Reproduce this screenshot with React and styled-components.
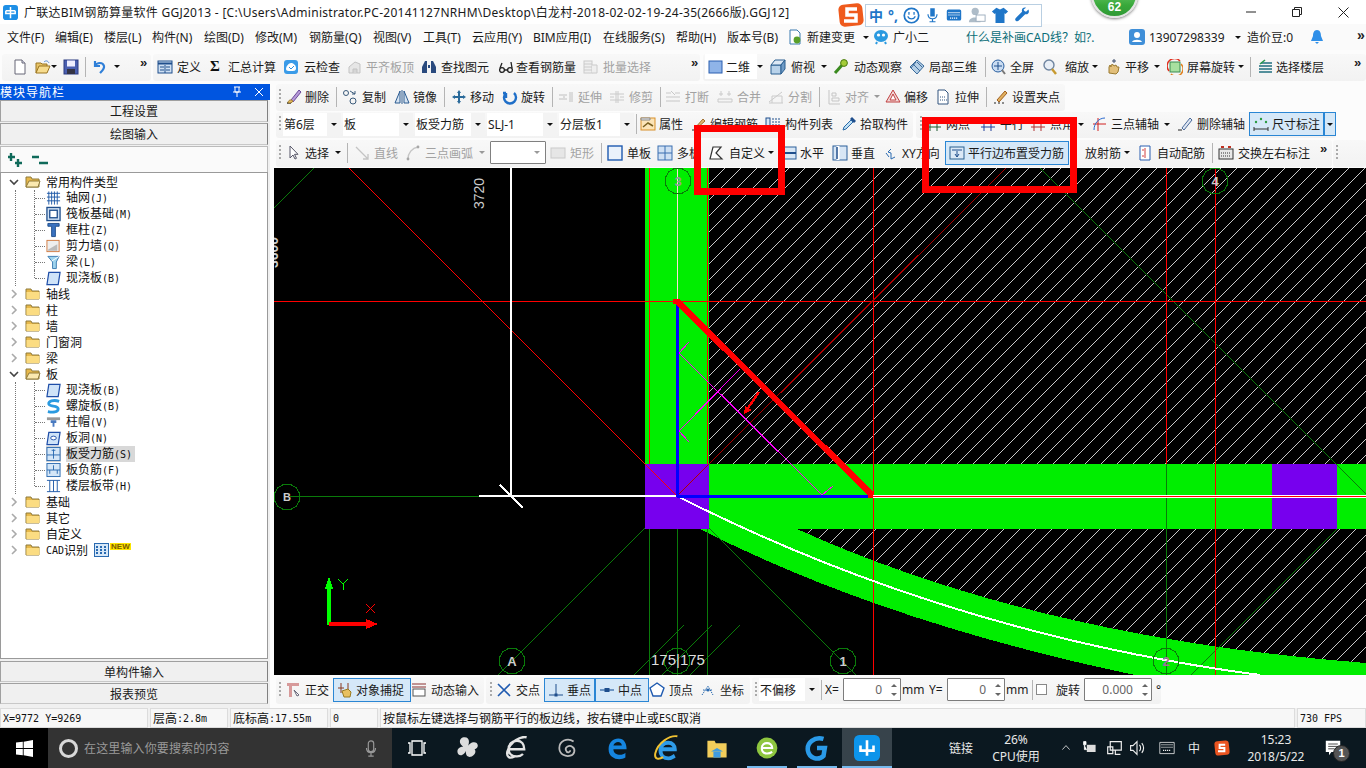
import React from "react";
import styled, { createGlobalStyle } from "styled-components";

const Global = createGlobalStyle`
  html, body { margin: 0; padding: 0; background: #fff; overflow: hidden; }
  * { box-sizing: border-box; }
`;

const UI = `"Noto Sans", "Noto Sans CJK SC", sans-serif`;

/* ---------- icons ---------- */
const ICONS = {
  new: <><path d="M3 1h7l3 3v11H3z" fill="#fff" stroke="#667" /><path d="M10 1v3h3" fill="#dde" stroke="#667" /></>,
  open: <><path d="M1 14V4h5l1 1h5v2" fill="#e8c468" stroke="#9a7420" /><path d="M1 14l3-7h11l-3 7z" fill="#f7dc8e" stroke="#9a7420" /><path d="M9 3c2-2 4-1 5 1" stroke="#5a8fd5" fill="none" /></>,
  save: <><rect x="1" y="1" width="14" height="14" fill="#4a5fb0" stroke="#2a3a80" /><rect x="4" y="1.5" width="8" height="6" fill="#eef" /><rect x="4" y="10" width="8" height="5" fill="#334" /></>,
  undo: <path d="M4 2v5h5M4 7c2-4 8-4 9 0 .6 3-2 5-4 7" stroke="#2f7fd8" strokeWidth="2.2" fill="none" />,
  def: <><rect x="1" y="2" width="14" height="12" fill="#cfe0f3" stroke="#1f4e8c" /><path d="M1 4.5h14" stroke="#1f4e8c" strokeWidth="2" /><path d="M3 8h4M3 11h4M9 8h4M9 11h4M8 6v8" stroke="#1f4e8c" /></>,
  cloud: <><rect x="1" y="1" width="14" height="14" rx="3" fill="#3a9be8" /><path d="M3 10c0-3 3-6 5-6s5 2 5 5-2 3-5 3-5 0-5-2z" fill="#fff" /><path d="M6 8l2 2 3-3" stroke="#2b8fe0" fill="none" /></>,
  flat: <><path d="M2 14V8l6-5 5 2v9z" fill="#e4e4e4" stroke="#bbb" /><path d="M6 14v-4h4v4" stroke="#bbb" fill="#d0d0d0" /></>,
  binoc: <path d="M2 6l2-4h2v4v8H1V8zM14 6l-2-4h-2v4v8h5V8zM7 6h2v3H7z" fill="#2a4a7e" />,
  glasses: <g stroke="#222" fill="none" strokeWidth="1.3"><circle cx="4" cy="11" r="2.4" /><circle cx="12" cy="11" r="2.4" /><path d="M6.5 11h3M2 9l2-5M14 9l-1-6" /></g>,
  batch: <g stroke="#c4c4c4" fill="#eee"><rect x="1" y="2" width="8" height="12" /><path d="M1 5h8M1 8h8M1 11h8" /><path d="M9 6h5v8H9" /></g>,
  square: <rect x="1" y="2" width="13" height="12" fill="#8fb4e8" stroke="#2a5fb0" />,
  box3d: <g stroke="#2a5f90" fill="#b8d2ea"><path d="M1 6h10v9H1z" /><path d="M1 6l4-5h10l-4 5z" fill="#dce8f5" /><path d="M11 6l4-5v9l-4 5z" fill="#6f9bc6" /></g>,
  orbit: <><path d="M2 14L10 5" stroke="#3a8a1f" strokeWidth="3" /><circle cx="11" cy="4" r="3.4" fill="#a4cc38" stroke="#4a7a10" /></>,
  local3d: <g stroke="#3a6a9a" fill="#b5cfe6"><path d="M8 1l7 6-7 8-7-7z" /><path d="M4 5l7 7M8 3l5 5M2 9l5-6" fill="none" /></g>,
  full: <><circle cx="8" cy="7" r="6" fill="#c9dcf2" stroke="#2a5fa0" /><path d="M8 3v8M4 7h8" stroke="#1f4e8c" /><path d="M12 11l3 4" stroke="#777" strokeWidth="2" /></>,
  zoom: <><circle cx="7" cy="6" r="5" fill="#e8eef6" stroke="#6f85a0" strokeWidth="1.4" /><path d="M10 10l4 5" stroke="#c79a30" strokeWidth="2.4" /></>,
  pan: <><path d="M4 14V8l1-2 1 2V6l2-.5L9 7l2-1 1 2 2 0-1 5-2 2z" fill="#e2bf7a" stroke="#9a7a30" /><path d="M9 0v4M7 2h4" stroke="#3a4a6a" /></>,
  rotscr: <><rect x="3" y="3" width="10" height="10" fill="#a8e0a0" stroke="#3a8a50" /><path d="M2 12A7 7 0 0 1 13 2" stroke="#e03020" fill="none" strokeWidth="1.5" /><path d="M14 5A7 7 0 0 1 4 15" stroke="#e08020" fill="none" strokeWidth="1.5" /></>,
  floors: <g stroke="#1f6f7f" strokeWidth="1.6"><path d="M4 4h11M2 7h13M2 10h13M2 13h13" /><path d="M8 1L3 5" stroke="#2a9a50" /></g>,
  brush: <><path d="M1 14h4" stroke="#222" strokeWidth="1.4" /><path d="M5 11L13 1l2 2-8 10z" fill="#b79ad8" stroke="#6a4a9a" /><path d="M2 14c0-3 3-4 5-2-1 2-3 2-5 2z" fill="#e6b860" stroke="#a08030" /></>,
  copy: <g fill="none" stroke="#3a5a7a"><circle cx="4" cy="4" r="2.5" /><circle cx="11" cy="12" r="3" /><path d="M8 2l5 3M13 2v3h-3" /></g>,
  mirror: <g fill="#d6e4f2" stroke="#2a5a90"><path d="M1 14L6 2v12zM15 14L10 2v12z" /><path d="M8 1v14" /></g>,
  move: <path d="M8 1l2 3H9v3h3V6l3 2-3 2V9H9v3h1l-2 3-2-3h1V9H4v1L1 8l3-2v1h3V4H6z" fill="#2a6a9a" />,
  rotate: <path d="M12 3a6 6 0 1 1-8 0M4 3v5M4 3h-3" transform="translate(0 1)" stroke="#1f6fc8" strokeWidth="2.4" fill="none" />,
  extend: <path d="M1 6h8M1 10h8M5 8h2M12 3v10M14 3v10" stroke="#b8b8b8" fill="none" />,
  trim: <path d="M1 8h4M11 8h4M1 5h14M1 11h14M7 2v12M9 2v12" stroke="#c4c4c4" fill="none" />,
  brk: <path d="M1 4h5M10 4h5M1 12h14M1 8h14M6 2l4 4" stroke="#c0c0c0" fill="none" />,
  merge: <path d="M2 5h4M10 5h4M1 10h14v3H1zM4 2v5M12 2v5" stroke="#c4c4c4" fill="none" />,
  split: <path d="M1 13l13-10M1 14h14M4 14V7h10v7" stroke="#c4c4c4" fill="none" />,
  align: <path d="M3 1v14h11M6 4h4v3H6zM6 9h7v3H6z" stroke="#bdbdbd" fill="none" />,
  offset: <><path d="M8 1l7 12H1z" fill="#f2d8d8" stroke="#c04040" /><path d="M8 5l3 6H5z" fill="#fff" stroke="#c04040" /></>,
  stretch: <><path d="M3 1h7l3 3v11H3z" fill="#fff" stroke="#33557f" /><path d="M5 8h5M5 11h7" stroke="#33557f" strokeDasharray="1 1" /></>,
  grip: <><path d="M1 14h2M5 14h2M9 14h2" stroke="#222" /><path d="M4 11L12 2l2 2-8 9z" fill="#e0b060" stroke="#a06020" /></>,
  prop: <><rect x="1" y="2" width="14" height="12" fill="#fbe4b8" stroke="#d8902a" /><path d="M3 11l5-4 5 3" stroke="#7a6020" fill="none" strokeWidth="1.5" /><path d="M1 2h9v2H1z" fill="#eee" stroke="#888" /></>,
  editbar: <><path d="M1 14h2" stroke="#222" /><path d="M4 12L12 3l2 2-9 8z" fill="#e2b870" stroke="#a07030" /></>,
  list: <g stroke="#1f4e8c"><rect x="1" y="2" width="4" height="12" fill="#d8e6f5" /><path d="M7 3h8M7 6h8M7 9h8M7 12h8" strokeDasharray="2 1" /></g>,
  pick: <><path d="M2 14l1-3 7-7 2 2-7 7z" fill="#bfe0f5" stroke="#2a6aa8" /><path d="M9 3l2-2 4 4-2 2z" fill="#1f4e8c" /></>,
  axisnet: <path d="M4 1v14M11 1v14M1 4h14M1 11h14" stroke="#1f5a30" fill="none" />,
  axisrow: <path d="M4 1v14M11 1v14M1 4h14M1 11h14" stroke="#1f3f9a" fill="none" />,
  axispt: <path d="M4 1v14M11 1v14M1 4h14M1 11h14" stroke="#b03030" fill="none" />,
  arcaxis: <><path d="M2 8h13M7 2v13" stroke="#d02020" /><path d="M3 14C3 7 8 2 14 2" stroke="#2a6ad0" fill="none" /></>,
  delaxis: <><path d="M1 14h4" stroke="#222" /><path d="M5 12L13 2l2 2-8 10z" fill="#dfe6f2" stroke="#4a6a9a" /></>,
  dim: <><path d="M1 13h14M1 11v4M15 11v4" stroke="#333" /><circle cx="3" cy="6" r="1.2" fill="#2a9a40" /><circle cx="8" cy="3" r="1.2" fill="#2a9a40" /><circle cx="13" cy="6" r="1.2" fill="#2a9a40" /></>,
  cursor: <path d="M4 1v12l3-3 2 4 1.5-.7-2-4H12z" fill="#fff" stroke="#556" />,
  line: <path d="M1 2l12 12M13 9v5H8" stroke="#bcbcbc" fill="none" strokeWidth="1.3" />,
  arc: <><path d="M3 14C3 8 7 3 13 2" stroke="#bdbdbd" fill="none" strokeWidth="1.4" /><circle cx="3" cy="14" r="1.4" fill="#999" /><circle cx="13" cy="2" r="1.4" fill="#999" /></>,
  rectoff: <rect x="1" y="3" width="14" height="10" fill="#e4e4e4" stroke="#c4c4c4" />,
  slab: <rect x="1" y="1" width="14" height="14" fill="#eaf2fb" stroke="#1f5ab0" strokeWidth="1.4" />,
  multi: <g fill="#cfe0f3" stroke="#3a6fb0"><rect x="1" y="1" width="14" height="14" /><path d="M8 1v14M1 8h14" /></g>,
  custom: <path d="M2 14L5 2h8l-5 6 6 6z" fill="#fff" stroke="#333" strokeWidth="1.2" />,
  horiz: <><rect x="1" y="2" width="14" height="12" fill="#d8e6f5" stroke="#2a5f9a" /><path d="M1 8h14" stroke="#1f4e8c" strokeWidth="2" /></>,
  vert: <><rect x="1" y="1" width="14" height="14" fill="#d8e6f5" stroke="#2a5f9a" /><path d="M6 1v14" stroke="#fff" strokeWidth="3" /><path d="M5 2v12" stroke="#1f4e8c" strokeWidth="1.5" /></>,
  xy: <><path d="M8 4l-3 3 3 1v6l4-2" stroke="#2a6ab0" fill="none" /><path d="M3 8l3 4" stroke="#2a6ab0" /></>,
  parallel: <><rect x="1" y="2" width="14" height="12" fill="#dbe9f7" stroke="#2a6090" /><path d="M3 5h10M8 6v6M6 9l2 3 2-3" stroke="#1f4e8c" fill="none" /></>,
  autobar: <><path d="M3 1h10v14H3z" fill="#fff" stroke="#2a5fb0" /><path d="M8 3v10M5 5h2M5 11h2" stroke="#d04040" /></>,
  swap: <><rect x="1" y="4" width="14" height="10" fill="#e8e8e8" stroke="#333" /><path d="M3 8h10M3 11h10" stroke="#333" strokeDasharray="1 1" /><path d="M3 2h3M10 2h3" stroke="#c03020" strokeWidth="2" /></>,
  ortho: <><path d="M2 1h12v3H7v11H4V4H2z" fill="#d79a9a" /><path d="M9 8l5 5-2 1z" fill="#fff" stroke="#667" /></>,
  snap: <><path d="M4 1v10M11 1v10M1 6h6" stroke="#8a3a20" /><path d="M5 9l6-2 3 3-1 5H7z" fill="#e8c060" stroke="#9a7a20" /></>,
  dyn: <><path d="M1 2h14M1 5h14" stroke="#8a3030" /><rect x="2" y="7" width="12" height="7" fill="#fff" stroke="#555" /></>,
  cross: <path d="M2 2l12 12M14 2L2 14" stroke="#1f5ab0" strokeWidth="1.6" />,
  perp: <><path d="M1 13h14M8 2v11" stroke="#1f4e8c" /><rect x="6.5" y="11.5" width="3" height="3" fill="#1f4e8c" /></>,
  mid: <><path d="M1 8h14" stroke="#2a5fa0" strokeWidth="1.2" /><rect x="5.5" y="6" width="5" height="4" fill="#1f4e8c" /></>,
  vertex: <path d="M8 1l7 5-3 8H4L1 6z" fill="#fff" stroke="#1f5ab0" strokeWidth="1.4" />,
  coord: <><path d="M2 13L8 4l5 9M3 8h10" stroke="#2a6ab0" fill="none" strokeDasharray="1.5 1" /><circle cx="8" cy="8" r="1.5" fill="#2a6ab0" /></>,
  doc: <><path d="M3 1h7l3 3v11H3z" fill="#fff" stroke="#3a7ab0" /><circle cx="10" cy="11" r="3.4" fill="#5aa02a" /></>,
  xiao: <><ellipse cx="8" cy="7" rx="7" ry="6" fill="#2a9ae0" /><circle cx="5.5" cy="6" r="1.6" fill="#fff" /><circle cx="10.5" cy="6" r="1.6" fill="#fff" /><path d="M4 13l-1 2M12 13l1 2" stroke="#2a9ae0" strokeWidth="2" /></>,
  user: <><rect x="0" y="0" width="16" height="16" rx="3" fill="#3f8fd8" /><circle cx="8" cy="6" r="3" fill="#fff" /><path d="M3 13c1-3 9-3 10 0z" fill="#fff" /></>,
  bell: <path d="M8 1c-3 0-4 3-4 6l-2 5h12l-2-5c0-3-1-6-4-6zM6 13h4l-2 2z" fill="#2f8fe8" />,
};

const Svg = styled.svg`
  display: block;
  flex: none;
`;
const Ic = ({ n, s = 16 }) => (
  <Svg width={s} height={s} viewBox="0 0 16 16">{ICONS[n]}</Svg>
);

/* ---------- title / menu ---------- */
const Root = styled.div`
  position: relative;
  width: 1366px;
  height: 768px;
  overflow: hidden;
  display: flex;
  flex-direction: column;
  font-family: ${UI};
  font-size: 12px;
  color: #1a1a1a;
  background: #fff;
`;
const TitleBar = styled.div`
  height: 24px;
  flex: none;
  display: flex;
  align-items: center;
  padding-left: 3px;
  background: #fff;
`;
const AppLogo = styled.svg`
  flex: none;
  margin-right: 6px;
`;
const TitleText = styled.div`
  white-space: nowrap;
  font-size: 12px;
  letter-spacing: .27px;
  width: 815px;
`;
const WinBtns = styled.div`
  margin-left: auto;
  display: flex;
  height: 24px;
`;
const WinBtn = styled.div`
  width: 46px;
  height: 24px;
  display: flex;
  align-items: center;
  justify-content: center;
`;
const MenuBar = styled.div`
  height: 26px;
  flex: none;
  display: flex;
  align-items: center;
  background: #fafafa;
`;
const MenuSlot = styled.div`
  flex: none;
  width: ${p => p.$w}px;
  display: flex;
  align-items: center;
  white-space: nowrap;
  color: ${p => p.$c || "#1a1a1a"};
  gap: ${p => p.$gap || 0}px;
`;
const Chev = styled.span`
  font: bold 14px "Liberation Sans", sans-serif;
  color: #222;
  line-height: 12px;
  position: relative;
  top: -2px;
`;

/* ---------- toolbars ---------- */
const Band = styled.div`
  flex: none;
  display: flex;
  height: ${p => p.$h}px;
  padding-top: ${p => p.$top || 0}px;
  background: #fcfcfc;
`;
const StripBox = styled.div`
  flex: none;
  display: flex;
  align-items: center;
  height: ${p => p.$sh}px;
  width: ${p => p.$w}px;
  margin-left: ${p => p.$ml}px;
  padding-left: ${p => p.$pl}px;
  padding-bottom: 2px;
  background: linear-gradient(#f8f8f8, #f2f2f2);
  border-radius: 3px;
`;
const Tool = styled.div`
  flex: none;
  width: ${p => p.$w}px;
  height: ${p => (p.$hl ? "24px" : "100%")};
  display: flex;
  align-items: center;
  white-space: nowrap;
  overflow: hidden;
  color: ${p => (p.$off ? "#a2a2a2" : "#1a1a1a")};
  background: ${p => (p.$hl ? "#d5e8f8" : p.$white ? "#fff" : "transparent")};
  border: ${p => (p.$hl ? "1px solid #2a86d4" : "0")};
  justify-content: ${p => (p.$hl && !p.$txt ? "center" : "flex-start")};
`;
const Slot = styled.div`
  flex: none;
  width: ${p => p.$w}px;
  display: flex;
  justify-content: ${p => (p.$center ? "center" : "flex-start")};
  opacity: ${p => (p.$off ? 0.85 : 1)};
`;
const Sigma = styled.span`
  font: bold 15px "Liberation Serif", serif;
  color: #111;
  padding-left: 2px;
`;
const Caret = styled.i`
  display: block;
  width: 0;
  height: 0;
  border-left: 3px solid transparent;
  border-right: 3px solid transparent;
  border-top: 3px solid ${p => (p.$off ? "#999" : "#111")};
`;
const GripMark = styled.div`
  width: 2px;
  height: 16px;
  background: repeating-linear-gradient(#aaa 0 2px, transparent 2px 4px);
`;
const SepMark = styled.div`
  width: 1px;
  height: 20px;
  background: #b4b4b4;
`;
const More = styled.span`
  font: bold 13px "Liberation Sans", sans-serif;
  color: #222;
  line-height: 13px;
  margin-bottom: 8px;
  display: block;
`;
const Combo = styled.div`
  flex: none;
  width: ${p => p.$w}px;
  margin-right: 2px;
  height: 23px;
  display: flex;
  align-items: center;
  background: #fff;
  padding-left: 1px;
  white-space: nowrap;
`;
const ComboText = styled.div`
  flex: 1;
`;
const ComboCaret = styled.div`
  flex: none;
  width: 14px;
  height: 100%;
  background: #f3f3f3;
  display: flex;
  align-items: center;
  justify-content: center;
`;
const EmptyBox = styled.div`
  flex: none;
  width: ${p => p.$w}px;
  height: 23px;
  border: 1px solid #808080;
  background: #fff;
  border-radius: 1px;
  display: flex;
  align-items: center;
  justify-content: flex-end;
  padding-right: 5px;
`;
const Spin = styled.div`
  flex: none;
  width: ${p => p.$w}px;
  height: 23px;
  border: 1px solid #7c7c7c;
  border-radius: 1px;
  background: #fff;
  display: flex;
  align-items: center;
  color: #666;
`;
const SpinVal = styled.div`
  flex: 1;
  text-align: right;
  padding-right: 5px;
  font-size: 12px;
`;
const SpinArrows = styled.div`
  flex: none;
  width: 13px;
  display: flex;
  flex-direction: column;
  gap: 6px;
  align-items: center;
`;
const Up = styled.i`
  display: block;
  width: 0;
  height: 0;
  border-left: 3px solid transparent;
  border-right: 3px solid transparent;
  border-bottom: 3px solid #666;
`;
const Down = styled(Up)`
  border-bottom: 0;
  border-top: 3px solid #666;
`;
const CheckBox = styled.div`
  width: 11px;
  height: 11px;
  border: 1px solid #888;
  background: #fff;
`;

const T = (x, i, tx, t, o = {}) => ({ x, i, tx, t, ...o });
const DD = (x, o = {}) => ({ x, dd: 1, ...o });
const GR = x => ({ x, grip: 1 });
const SP = x => ({ x, sep: 1 });
const MO = x => ({ x, more: 1 });
const CO = (x, c) => ({ x, combo: c });
const GAP = x => ({ x });

function Item({ it, w }) {
  if (it.grip) return <Tool $w={w}><GripMark /></Tool>;
  if (it.sep) return <Tool $w={w}><SepMark /></Tool>;
  if (it.more) return <Tool $w={w}><More>»</More></Tool>;
  if (it.dd) return <Tool $w={w} $hl={it.hl}><Caret $off={it.off} /></Tool>;
  if (it.sigma) return <Tool $w={w}><Sigma>Σ</Sigma></Tool>;
  if (it.combo) {
    return (
      <Combo $w={w - 2}>
        <ComboText>{it.combo}</ComboText>
        <ComboCaret><Caret /></ComboCaret>
      </Combo>
    );
  }
  if (it.box) return <Tool $w={w}><EmptyBox $w={it.box}><Caret $off /></EmptyBox></Tool>;
  if (it.spin) {
    return (
      <Tool $w={w}>
        <Spin $w={it.bw}>
          <SpinVal>{it.spin}</SpinVal>
          <SpinArrows><Up /><Down /></SpinArrows>
        </Spin>
      </Tool>
    );
  }
  if (it.check) return <Tool $w={w}><CheckBox /></Tool>;
  return (
    <Tool $w={w} $off={it.off} $hl={it.hl} $txt $white={it.white}>
      {it.i && (
        <Slot $w={it.tx - it.x - (it.hl ? 1 : 0)} $center={it.hl || it.white} $off={it.off}>
          <Ic n={it.i} />
        </Slot>
      )}
      {it.t}
    </Tool>
  );
}

function Strip({ from, to, prev, sh, items }) {
  return (
    <StripBox $sh={sh} $w={to - from} $ml={from - prev} $pl={items[0] ? items[0].x - from : 0}>
      {items.map((it, k) => (
        <Item key={k} it={it} w={(items[k + 1] ? items[k + 1].x : to) - it.x} />
      ))}
    </StripBox>
  );
}

const rowA = [
  { from: 2, to: 151, items: [T(12, "new", 30), T(35, "open", 51), DD(51), T(63, "save", 82), SP(85), T(91, "undo", 112), DD(114), MO(140)] },
  { from: 153, to: 700, items: [T(157, "def", 177, "定义"), { x: 208, sigma: 1 }, T(228, null, 228, "汇总计算"), T(283, "cloud", 304, "云检查"), T(347, "flat", 366, "平齐板顶", { off: 1 }), T(421, "binoc", 441, "查找图元"), T(498, "glasses", 516, "查看钢筋量"), T(583, "batch", 603, "批量选择", { off: 1 }), MO(691)] },
  { from: 703, to: 1366, items: [T(705, "square", 726, "二维", { white: 1 }), DD(757), T(770, "box3d", 791, "俯视"), DD(821), T(833, "orbit", 854, "动态观察"), T(909, "local3d", 929, "局部三维"), SP(985), T(990, "full", 1010, "全屏"), T(1042, "zoom", 1065, "缩放"), DD(1092), T(1105, "pan", 1125, "平移"), DD(1154), T(1167, "rotscr", 1187, "屏幕旋转"), DD(1238), SP(1250), T(1257, "floors", 1276, "选择楼层"), MO(1354)] },
];
const rowB = [
  { from: 276, to: 1065, items: [GR(279), T(286, "brush", 305, "删除"), SP(336), T(342, "copy", 362, "复制"), T(394, "mirror", 413, "镜像"), SP(444), T(451, "move", 470, "移动"), T(502, "rotate", 521, "旋转"), SP(552), T(558, "extend", 578, "延伸", { off: 1 }), T(609, "trim", 629, "修剪", { off: 1 }), SP(660), T(665, "brk", 685, "打断", { off: 1 }), T(717, "merge", 737, "合并", { off: 1 }), T(768, "split", 788, "分割", { off: 1 }), SP(819), T(826, "align", 845, "对齐", { off: 1 }), DD(874, { off: 1 }), T(885, "offset", 904, "偏移"), T(935, "stretch", 955, "拉伸"), SP(986), T(993, "grip", 1012, "设置夹点")] },
];
const rowC = [
  { from: 276, to: 913, items: [GR(279), CO(283, "第6层"), CO(343, "板"), CO(415, "板受力筋"), CO(487, "SLJ-1"), CO(559, "分层板1"), SP(636), T(640, "prop", 659, "属性"), T(691, "editbar", 710, "编辑钢筋"), T(765, "list", 785, "构件列表"), T(841, "pick", 860, "拾取构件")] },
  { from: 916, to: 1336, items: [GR(920), T(926, "axisnet", 946, "网点"), T(980, "axisrow", 1000, "平行"), T(1030, "axispt", 1050, "点角"), DD(1078), T(1091, "arcaxis", 1111, "三点辅轴"), DD(1164), T(1177, "delaxis", 1197, "删除辅轴"), T(1249, "dim", 1272, "尺寸标注", { hl: 1 }), DD(1324, { hl: 1 })] },
];
const rowD = [
  { from: 276, to: 1332, items: [GR(279), T(286, "cursor", 305, "选择"), DD(335), SP(347), T(355, "line", 374, "直线", { off: 1 }), T(405, "arc", 425, "三点画弧", { off: 1 }), DD(479, { off: 1 }), { x: 490, box: 56 }, T(550, "rectoff", 570, "矩形", { off: 1 }), SP(601), T(607, "slab", 627, "单板"), T(657, "multi", 677, "多板"), T(708, "custom", 729, "自定义"), DD(768), T(781, "horiz", 800, "水平"), T(832, "vert", 851, "垂直"), T(883, "xy", 902, "XY方向"), T(945, "parallel", 968, "平行边布置受力筋", { hl: 1 }), GAP(1069), { x: 1085, t: "放射筋" }, DD(1124), T(1137, "autobar", 1157, "自动配筋"), SP(1212), T(1218, "swap", 1238, "交换左右标注"), MO(1320)] },
  { from: 1333, to: 1366, items: [GR(1336)] },
];
const rowE = [
  { from: 276, to: 484, items: [GR(279), T(285, "ortho", 305, "正交"), T(333, "snap", 356, "对象捕捉", { hl: 1 }), T(411, "dyn", 431, "动态输入")] },
  { from: 486, to: 750, items: [GR(490), T(496, "cross", 516, "交点"), T(544, "perp", 567, "垂点", { hl: 1 }), T(595, "mid", 618, "中点", { hl: 1 }), T(649, "vertex", 669, "顶点"), T(700, "coord", 720, "坐标")] },
  { from: 752, to: 1161, items: [GR(755), CO(759, "不偏移"), SP(821), { x: 825, t: "X=" }, { x: 843, spin: "0", bw: 58 }, { x: 902, t: "mm" }, { x: 929, t: "Y=" }, { x: 947, spin: "0", bw: 58 }, { x: 1006, t: "mm" }, SP(1032), { x: 1036, check: 1 }, { x: 1056, t: "旋转" }, { x: 1084, spin: "0.000", bw: 68 }, { x: 1156, t: "°" }] },
];

function Toolband({ strips, start, h, top, sh }) {
  return (
    <Band $h={h} $top={top}>
      {strips.map((s, k) => (
        <Strip key={k} {...s} sh={sh} prev={k ? strips[k - 1].to : start} />
      ))}
    </Band>
  );
}

/* ---------- left panel ---------- */
const Main = styled.div`
  flex: none;
  height: 624px;
  display: flex;
`;
const LeftPanel = styled.div`
  flex: none;
  width: 270px;
  display: flex;
  flex-direction: column;
  padding-bottom: 3px;
  background: #f0f0f0;
`;
const PanelHead = styled.div`
  flex: none;
  height: 16px;
  background: #0055e0;
  color: #fff;
  display: flex;
  align-items: center;
  padding-right: 5px;
  font-size: 12px;
`;
const PanelTitle = styled.div`
  flex: 1;
  letter-spacing: 1px;
`;
const PanelBtn = styled.div`
  flex: none;
  height: ${p => p.$h || 22}px;
  width: 268px;
  margin-bottom: 1px;
  display: flex;
  align-items: center;
  justify-content: center;
  background: #f0f0f0;
  border: 1px solid #a0a0a0;
  border-right-color: #808080;
  border-bottom-color: #c8c8c8;
`;
const ExpandRow = styled.div`
  flex: none;
  height: 26px;
  width: 268px;
  display: flex;
  align-items: center;
  gap: 9px;
  padding-left: 6px;
  background: #fafafa;
  border: 1px solid #bbb;
  border-bottom: 0;
`;
const Tree = styled.div`
  flex: 1;
  width: 268px;
  margin-bottom: 2px;
  padding-top: 1px;
  background: #fff;
  border: 1px solid #9a9a9a;
  overflow: hidden;
`;
const Row = styled.div`
  height: 16px;
  display: flex;
  align-items: center;
  white-space: nowrap;
  position: relative;
  color: #111;
`;
const ChevSlot = styled.div`
  flex: none;
  width: 24px;
  padding-left: 8px;
  display: flex;
`;
const FolderSlot = styled.div`
  flex: none;
  width: 21px;
  display: flex;
`;
const Kids = styled.div`
  margin-left: 14px;
  border-left: 1px dotted #777;
`;
const Kid = styled.div`
  height: 16px;
  display: flex;
  align-items: center;
  padding-left: 30px;
  white-space: nowrap;
  position: relative;
  color: #111;
  &::before {
    content: "";
    position: absolute;
    left: 18px;
    top: 0;
    height: ${p => (p.$last ? "8px" : "16px")};
    border-left: 1px dotted #777;
  }
  &::after {
    content: "";
    position: absolute;
    left: 19px;
    top: 8px;
    width: 10px;
    border-top: 1px dotted #777;
  }
`;
const KidIcon = styled.div`
  flex: none;
  width: 15px;
  height: 16px;
  margin-right: 5px;
  background: ${p => (p.$sel ? "#d8d8d8" : "transparent")};
`;
const KidText = styled.div`
  background: ${p => (p.$sel ? "#d8d8d8" : "transparent")};
  padding-right: 3px;
  line-height: 16px;
  height: 16px;
`;
const Mono = styled.span`
  font-family: "DejaVu Sans Mono", "Liberation Mono", monospace;
  font-size: 10px;
`;
const NewTag = styled.span`
  font: bold 8px "Liberation Sans", sans-serif;
  color: #7a5a00;
  background: #ffe600;
  line-height: 7px;
  padding: 0 1px;
  position: relative;
  top: -4px;
`;
const CadIcon = styled.svg`
  margin: 0 1px 0 6px;
  flex: none;
`;

const Folder = ({ open }) => (
  <Svg width="16" height="16" viewBox="0 0 16 16">
    <path d="M1 13V3h5l1 2h7v8z" fill="#e7b84a" stroke="#8f7a3a" />
    {open
      ? <path d="M1 13l3-6h11l-2 6z" fill="#fbe9b0" stroke="#8f7a3a" />
      : <path d="M1.5 6h13v7h-13z" fill="#fbdc82" />}
  </Svg>
);
const Chevron = ({ open }) => (
  <Svg width="10" height="10" viewBox="0 0 10 10">
    {open
      ? <path d="M1 3l4 4 4-4" fill="none" stroke="#444" strokeWidth="1.6" />
      : <path d="M3 1l4 4-4 4" fill="none" stroke="#aaa" strokeWidth="1.6" />}
  </Svg>
);
const TI = {
  grid: <g stroke="#1f5aa8" fill="none"><path d="M3 1v14M6 1v14M9 1v14M12 1v14M1 3h14M1 7h14M1 11h14" /></g>,
  raft: <g stroke="#1f4e8c" fill="#cfe0f3" strokeWidth="1.4"><rect x="1" y="1" width="14" height="14" /><rect x="4" y="4" width="8" height="8" fill="#fff" /></g>,
  col: <path d="M2 1h12v3H10v11H6V4H2z" fill="#3a72c0" stroke="#1f4e8c" />,
  wall: <><rect x="1" y="2" width="13" height="12" fill="#eee" stroke="#d07a40" /><path d="M2 12l10-6v7H2z" fill="#bbb" /></>,
  beam: <><path d="M2 2h12l-3 6v7H7V8z" fill="#9fd4ee" stroke="#3a7ab0" /><path d="M6 7l8-5" stroke="#fff" /></>,
  slab: <path d="M3 2h12l-2 13H1z" fill="#cfe3f8" stroke="#1f4ea8" strokeWidth="1.3" />,
  spiral: <path d="M14 3C8 1 2 3 3 6s10 1 10 5-6 4-11 3" fill="none" stroke="#2a9ae0" strokeWidth="3" />,
  cap: <><path d="M1 3h14v3H1z" fill="#999" /><path d="M5 6h6v3H9v4H7V9H5z" fill="#4a7ac0" /></>,
  hole: <><path d="M3 2h12l-2 13H1z" fill="#cfe3f8" stroke="#1f4ea8" strokeWidth="1.3" /><ellipse cx="8" cy="8" rx="3" ry="2" fill="#fff" stroke="#1f4ea8" /></>,
  bar: <><rect x="1" y="1" width="14" height="14" fill="#d4e6f7" stroke="#2a6ab0" /><path d="M1 9h14M8 3v10M6 4h4" stroke="#2a6ab0" /></>,
  neg: <><rect x="1" y="1" width="14" height="14" fill="#d4e6f7" stroke="#2a6ab0" /><path d="M1 8h14M4 8v4M12 8v4M8 3v5" stroke="#2a6ab0" /></>,
  band: <g stroke="#1f5aa8" fill="none"><path d="M1 2h14M1 14h14M4 2v12M8 2v12M12 2v12" /></g>,
};
const TreeIc = ({ n }) => <Svg width="15" height="16" viewBox="0 0 16 16">{TI[n]}</Svg>;

const common = [["grid", "轴网", "(J)"], ["raft", "筏板基础", "(M)"], ["col", "框柱", "(Z)"], ["wall", "剪力墙", "(Q)"], ["beam", "梁", "(L)"], ["slab", "现浇板", "(B)"]];
const slabKids = [["slab", "现浇板", "(B)"], ["spiral", "螺旋板", "(B)"], ["cap", "柱帽", "(V)"], ["hole", "板洞", "(N)"], ["bar", "板受力筋", "(S)", true], ["neg", "板负筋", "(F)"], ["band", "楼层板带", "(H)"]];

const RootRow = ({ open, children }) => (
  <Row>
    <ChevSlot><Chevron open={open} /></ChevSlot>
    <FolderSlot><Folder open={open} /></FolderSlot>
    {children}
  </Row>
);
const KidList = ({ items }) => (
  <Kids>
    {items.map(([i, c, k, sel], n) => (
      <Kid key={n} $last={n === items.length - 1}>
        <KidIcon $sel={sel}><TreeIc n={i} /></KidIcon>
        <KidText $sel={sel}>{c}<Mono>{k}</Mono></KidText>
      </Kid>
    ))}
  </Kids>
);

/* ---------- canvas ---------- */
const CanvasCol = styled.div`
  flex: 1;
  display: flex;
  flex-direction: column;
  min-width: 0;
  background: #fcfcfc;
`;
const CanvasWrap = styled.div`
  flex: none;
  height: 507px;
  margin-left: 4px;
  background: #000;
  position: relative;
`;
const CanvasSvg = styled.svg`
  display: block;
`;

const DG = "#0a7a0a";
const Oct = ({ cx, cy, r = 13, label, c = "#ccc", fs = 13 }) => {
  const pts = Array.from({ length: 12 }, (_, i) => {
    const a = (i * Math.PI) / 6 + Math.PI / 12;
    return `${(cx + r * Math.cos(a)).toFixed(1)},${(cy + r * Math.sin(a)).toFixed(1)}`;
  }).join(" ");
  return (
    <g>
      <polygon points={pts} fill="none" stroke={DG} />
      <text x={cx} y={cy + fs * 0.38} textAnchor="middle" fontFamily="Liberation Sans" fontSize={fs} fontWeight="bold" fill={c} shapeRendering="geometricPrecision">{label}</text>
    </g>
  );
};
const L = ({ a, c = DG, w = 1 }) => <line x1={a[0]} y1={a[1]} x2={a[2]} y2={a[3]} stroke={c} strokeWidth={w} />;

const TOP_EDGE = "Q1038 638 797 529";
const HATCH_LINES = Array.from({ length: 110 }, (_, k) => 941 - 16 * 7 + 16 * k);

function Canvas() {
  return (
    <CanvasSvg width="1092" height="507" viewBox="274 168 1092 507" shapeRendering="crispEdges">
      <defs>
        <clipPath id="hatchArea">
          <rect x="709" y="168" width="657" height="296" />
          <path d={`M797 529L1366 529L1366 663${TOP_EDGE}Z`} />
        </clipPath>
      </defs>
      <rect x="274" y="168" width="1092" height="507" fill="#000" />
      <g clipPath="url(#hatchArea)">
        {HATCH_LINES.map(s => (
          <line key={s} x1={s - 168} y1={168} x2={s - 675} y2={675} stroke="#c8c8c8" strokeWidth="1" />
        ))}
      </g>
      <rect x="645" y="168" width="64" height="296" fill="#00ee00" />
      <rect x="709" y="464" width="657" height="65" fill="#00ee00" />
      <path d={`M700 529Q882 622 1135 675L1366 675L1366 663${TOP_EDGE}Z`} fill="#00ee00" />
      <rect x="645" y="464" width="64" height="65" fill="#7700ee" />
      <rect x="1272" y="464" width="65" height="65" fill="#7700ee" />

      {/* grid axes, green */}
      <L a={[274, 208, 314, 168]} />
      <L a={[645, 528, 498, 675]} />
      <L a={[709, 528, 856, 675]} />
      <L a={[1040, 168, 1366, 494]} />
      <L a={[1337, 529, 1191, 675]} />
      <L a={[290, 496, 479, 496]} />
      <L a={[649, 529, 649, 675]} />
      <L a={[677, 529, 677, 675]} />
      <L a={[707, 529, 707, 675]} />
      <L a={[1166, 464, 1166, 675]} />
      <L a={[684, 625, 634, 675]} />
      <L a={[712, 625, 662, 675]} />
      <L a={[740, 625, 690, 675]} />

      {/* red axes */}
      <L a={[274, 301, 1366, 301]} c="#f00" />
      <L a={[649, 168, 649, 464]} c="#f00" />
      <L a={[707, 168, 707, 464]} c="#f00" />
      <L a={[873, 168, 873, 675]} c="#f00" />
      <L a={[1166, 168, 1166, 464]} c="#f00" />
      <L a={[1215, 168, 1215, 675]} c="#f00" />
      <L a={[349, 168, 677, 496]} c="#f00" />
      <L a={[677, 496, 1006, 168]} c="#b00000" />

      {/* white axes */}
      <L a={[511, 168, 511, 496]} c="#fff" w={2} />
      <L a={[479, 495.5, 677, 495.5]} c="#fff" w={2} />
      <L a={[500, 485, 523, 508]} c="#fff" w={1.5} />
      <L a={[677.5, 168, 677.5, 301]} c="#ffd8d8" w={1.5} />
      <path d="M679 497Q950 634 1260 675" fill="none" stroke="#fff" strokeWidth="2" />

      <L a={[873, 496, 1366, 496]} c="#fff" w={3} />
      <L a={[873, 496, 1366, 496]} c="#f00" w={1} />

      {/* rebar and picked edge */}
      <L a={[677.5, 302, 677.5, 497]} c="#0000ff" w={3} />
      <L a={[677, 496.5, 873, 496.5]} c="#0000ff" w={3} />
      <L a={[679, 353, 822, 495]} c="#ff00ff" />
      <L a={[679, 353, 689, 342]} c="#ff00ff" />
      <L a={[822, 495, 833, 486]} c="#ff00ff" />
      <L a={[740, 369, 679, 431]} c="#ff00ff" />
      <L a={[679, 431, 689, 442]} c="#ff00ff" />
      <L a={[677, 301, 872, 495]} c="#f00" w={6} />
      <rect x="673" y="299" width="5" height="5" fill="#f00" />
      <rect x="868" y="493" width="5" height="5" fill="#f00" />
      <path d="M759 392L748 408" stroke="#f00" strokeWidth="2.4" />
      <polygon points="744,414 745,406 752,410" fill="#f00" />

      {/* axis circles */}
      <Oct cx={678} cy={181} label="3" c="#999" />
      <Oct cx={1215} cy={181} label="4" />
      <Oct cx={287} cy={497} label="B" fs={11} />
      <Oct cx={512} cy={661} label="A" />
      <Oct cx={677} cy={661} label="" />
      <Oct cx={843} cy={661} label="1" />
      <Oct cx={1166} cy={661} label="2" c="#a070a0" />

      <g shapeRendering="geometricPrecision">
        <text transform="translate(484 209) rotate(-90)" fontFamily="Liberation Sans" fontSize="14" fill="#ccc">3720</text>
        <text transform="translate(278 268) rotate(-90)" fontFamily="Liberation Sans" fontSize="14" fontWeight="bold" fill="#ccc">3600</text>
        <text x="678" y="665" textAnchor="middle" fontFamily="Liberation Sans" fontSize="15" fill="#ddd">175|175</text>
      </g>

      {/* coordinate marker */}
      <L a={[329, 625, 329, 587]} c="#00ff00" w={4} />
      <polygon points="329,576 325,589 333,589" fill="#00ff00" />
      <L a={[329, 624, 367, 624]} c="#f00" w={4} />
      <polygon points="378,624 366,619 366,629" fill="#f00" />
      <path d="M338 579l5 5 5-5M343 584v6" stroke="#00ff00" fill="none" />
      <path d="M366 604l9 9M375 604l-9 9" stroke="#f00" fill="none" />
    </CanvasSvg>
  );
}

const Mark = styled.div`
  position: absolute;
  left: ${p => p.$x}px;
  top: ${p => p.$y}px;
  width: ${p => p.$w}px;
  height: ${p => p.$h}px;
  border: 7px solid #f00;
  pointer-events: none;
`;
const Badge = styled.div`
  position: absolute;
  left: 1091px;
  top: -29px;
  width: 47px;
  height: 47px;
  border-radius: 50%;
  background: linear-gradient(#5cc05c 50%, #38a83a 75%, #2f9a35);
  border: 2px solid #e4e4e4;
  box-shadow: 0 1px 3px rgba(0, 0, 0, .5);
  color: #fff;
  font: bold 12px "Liberation Sans", sans-serif;
  display: flex;
  align-items: flex-end;
  justify-content: center;
  padding-bottom: 2px;
`;
const Ime = styled.div`
  position: absolute;
  left: 838px;
  top: 3px;
  height: 24px;
  display: flex;
  align-items: center;
`;
const ImeBox = styled.div`
  width: 177px;
  height: 23px;
  border: 1px solid #b9cfe2;
  background: #fff;
  display: flex;
  align-items: center;
  gap: 5px;
  padding-left: 3px;
  color: #1f76c8;
  font-weight: 700;
  font-size: 14px;
`;

/* ---------- status + taskbar ---------- */
const StatusBar = styled.div`
  flex: none;
  height: 20px;
  display: flex;
  gap: 2px;
  background: #f0f0f0;
`;
const Cell = styled.div`
  flex: none;
  width: ${p => p.$w}px;
  height: 20px;
  padding-left: 2px;
  display: flex;
  align-items: center;
  white-space: nowrap;
  overflow: hidden;
  background: #f7f7f7;
  border: 1px solid #dcdcdc;
  color: #111;
`;
const Taskbar = styled.div`
  flex: 1;
  display: flex;
  background: #0b1820;
  color: #e8e8e8;
`;
const Start = styled.div`
  flex: none;
  width: 48px;
  background: #000;
  display: flex;
  align-items: center;
  justify-content: center;
`;
const Search = styled.div`
  flex: none;
  width: 344px;
  background: #333;
  display: flex;
  align-items: center;
  padding-left: 11px;
  color: #9a9a9a;
  font-size: 12px;
  letter-spacing: .13px;
`;
const Cortana = styled.div`
  width: 19px;
  height: 19px;
  border: 3px solid #d8d8d8;
  border-radius: 50%;
  margin-right: 6px;
`;
const SearchMic = styled.div`
  margin-left: auto;
  margin-right: 12px;
`;
const TaskSlot = styled.div`
  flex: none;
  width: 50px;
  display: flex;
  align-items: center;
  justify-content: center;
  background-color: ${p => (p.$active ? "#37434b" : "transparent")};
  background-image: ${p => (p.$run ? "linear-gradient(#76b9ed, #76b9ed)" : "none")};
  background-size: ${p => (p.$active ? "50px" : "40px")} 2px;
  background-position: center bottom;
  background-repeat: no-repeat;
`;
const Tray = styled.div`
  flex: none;
  width: ${p => p.$w}px;
  display: flex;
  flex-direction: column;
  align-items: center;
  justify-content: center;
  line-height: 17px;
  font-size: 12px;
  white-space: nowrap;
  position: relative;
`;
const NoteNum = styled.div`
  position: absolute;
  right: 6px;
  bottom: 6px;
  width: 17px;
  height: 17px;
  border-radius: 50%;
  background: #555;
  border: 1px solid #222;
  color: #fff;
  font: bold 11px/15px "Liberation Sans", sans-serif;
  text-align: center;
`;

const W = ({ w = 20, h = 20, children }) => <Svg width={w} height={h} viewBox="0 0 20 20">{children}</Svg>;

const App = () => (
  <Root>
    <Global />
    <TitleBar>
      <AppLogo width="15" height="17" viewBox="0 0 16 18">
        <rect x="0" y="1" width="16" height="16" rx="3" fill="#1e8fe6" />
        <path d="M8 3v12M3 7h10M3 7v3h10V7" stroke="#fff" strokeWidth="1.6" fill="none" />
      </AppLogo>
      <TitleText>广联达BIM钢筋算量软件 GGJ2013 - [C:\Users\Administrator.PC-20141127NRHM\Desktop\白龙村-2018-02-02-19-24-35(2666版).GGJ12]</TitleText>
      <WinBtns>
        <WinBtn><Svg width="10" height="10" viewBox="0 0 10 10"><path d="M0 5h10" stroke="#222" /></Svg></WinBtn>
        <WinBtn><Svg width="10" height="10" viewBox="0 0 10 10"><path d="M.5 2.5h7v7h-7zM2.5 2.5v-2h7v7h-2" stroke="#222" fill="none" /></Svg></WinBtn>
        <WinBtn><Svg width="11" height="11" viewBox="0 0 11 11"><path d="M.5.5l10 10M10.500.5l-10 10" stroke="#222" /></Svg></WinBtn>
      </WinBtns>
    </TitleBar>

    <MenuBar>
      <MenuSlot $w={7} />
      <MenuSlot $w={48}>文件(F)</MenuSlot>
      <MenuSlot $w={49}>编辑(E)</MenuSlot>
      <MenuSlot $w={48}>楼层(L)</MenuSlot>
      <MenuSlot $w={52}>构件(N)</MenuSlot>
      <MenuSlot $w={51}>绘图(D)</MenuSlot>
      <MenuSlot $w={54}>修改(M)</MenuSlot>
      <MenuSlot $w={64}>钢筋量(Q)</MenuSlot>
      <MenuSlot $w={50}>视图(V)</MenuSlot>
      <MenuSlot $w={49}>工具(T)</MenuSlot>
      <MenuSlot $w={61}>云应用(Y)</MenuSlot>
      <MenuSlot $w={70}>BIM应用(I)</MenuSlot>
      <MenuSlot $w={73}>在线服务(S)</MenuSlot>
      <MenuSlot $w={51}>帮助(H)</MenuSlot>
      <MenuSlot $w={60}>版本号(B)</MenuSlot>
      <MenuSlot $w={76} $gap={4}><Ic n="doc" />新建变更</MenuSlot>
      <MenuSlot $w={10}><Caret /></MenuSlot>
      <MenuSlot $w={93} $gap={4}><Ic n="xiao" />广小二</MenuSlot>
      <MenuSlot $w={163} $c="#0a6e78">什么是补画CAD线？如?.</MenuSlot>
      <MenuSlot $w={106} $gap={4}><Ic n="user" />13907298339</MenuSlot>
      <MenuSlot $w={12}><Caret /></MenuSlot>
      <MenuSlot $w={62}>造价豆:0</MenuSlot>
      <MenuSlot $w={48}><Ic n="bell" /></MenuSlot>
      <MenuSlot $w={8}><Chev>»</Chev></MenuSlot>
    </MenuBar>

    <Toolband strips={rowA} start={0} h={34} top={4} sh={27} />

    <Main>
      <LeftPanel>
        <PanelHead>
          <PanelTitle>模块导航栏</PanelTitle>
          <Svg width="34" height="12" viewBox="0 0 34 12">
            <path d="M3 1h6M4 1v5h4V1M2 6h8M6 6v5" stroke="#fff" fill="none" />
            <path d="M24 2l8 8M32 2l-8 8" stroke="#fff" />
          </Svg>
        </PanelHead>
        <PanelBtn>工程设置</PanelBtn>
        <PanelBtn>绘图输入</PanelBtn>
        <ExpandRow>
          <Svg width="16" height="16" viewBox="0 0 16 16"><path d="M4 1v8M1 5h7M11 7v8M8 11h7" stroke="#0f6a5a" strokeWidth="2.4" /></Svg>
          <Svg width="16" height="16" viewBox="0 0 16 16"><path d="M0 5h7M7 11h9" stroke="#0f6a5a" strokeWidth="2.4" /></Svg>
        </ExpandRow>
        <Tree>
          <RootRow open>常用构件类型</RootRow>
          <KidList items={common} />
          <RootRow>轴线</RootRow>
          <RootRow>柱</RootRow>
          <RootRow>墙</RootRow>
          <RootRow>门窗洞</RootRow>
          <RootRow>梁</RootRow>
          <RootRow open>板</RootRow>
          <KidList items={slabKids} />
          <RootRow>基础</RootRow>
          <RootRow>其它</RootRow>
          <RootRow>自定义</RootRow>
          <RootRow>
            <Mono>CAD</Mono>识别
            <CadIcon width="15" height="14" viewBox="0 0 15 14">
              <rect x=".5" y=".5" width="14" height="13" fill="#d7e8f8" stroke="#2a6ab0" />
              <path d="M3 3v8M7 3v8M11 3v8" stroke="#2a6ab0" strokeWidth="2" strokeDasharray="2 1" />
            </CadIcon>
            <NewTag>NEW</NewTag>
          </RootRow>
        </Tree>
        <PanelBtn $h={21}>单构件输入</PanelBtn>
        <PanelBtn $h={21}>报表预览</PanelBtn>
      </LeftPanel>

      <CanvasCol>
        <Toolband strips={rowB} start={270} h={28} sh={27} />
        <Toolband strips={rowC} start={270} h={27} sh={26} />
        <Toolband strips={rowD} start={270} h={29} top={1} sh={27} />
        <CanvasWrap><Canvas /></CanvasWrap>
        <Toolband strips={rowE} start={270} h={33} top={2} sh={27} />
      </CanvasCol>
    </Main>

    <StatusBar>
      <Cell $w={148}><Mono>X=9772 Y=9269</Mono></Cell>
      <Cell $w={78}>层高<Mono>:2.8m</Mono></Cell>
      <Cell $w={98}>底标高<Mono>:17.55m</Mono></Cell>
      <Cell $w={48}><Mono>0</Mono></Cell>
      <Cell $w={915}>按鼠标左键选择与钢筋平行的板边线，按右键中止或<Mono>ESC</Mono>取消</Cell>
      <Cell $w={69}><Mono>730 FPS</Mono></Cell>
    </StatusBar>

    <Taskbar>
      <Start>
        <W w={17} h={17}><path d="M0 3l8-1v7.500H0zM9 2l11-2v9.500H9zM0 10.500h8V18l-8-1zM9 10.500h11V20L9 18z" fill="#fff" /></W>
      </Start>
      <Search>
        <Cortana />在这里输入你要搜索的内容
        <SearchMic><W w={18} h={18}><path d="M10 2a3 3 0 0 1 3 3v6a3 3 0 0 1-6 0V5a3 3 0 0 1 3-3zM5 10c0 7 10 7 10 0M10 15v4M7 19h6" fill="none" stroke="#999" strokeWidth="1.3" /></W></SearchMic>
      </Search>
      <TaskSlot><W><path d="M5 3h10v14H5zM1 5h2v10H1M19 5h-2v10h2" stroke="#fff" strokeWidth="1.3" fill="none" /></W></TaskSlot>
      <TaskSlot><W w={24} h={24}><path d="M10 10C2 8 3 1 8 1s4 6 2 9zM10 10c8-2 9 5 4 7s-6-4-4-7zM10 10c-2 8-8 7-8 3s5-5 8-3zM10 10c2-6 9-6 9-2s-6 4-9 2z" fill="#ddd" /></W></TaskSlot>
      <TaskSlot><W w={24} h={24}><path d="M4 11h12c0-4-2-7-6-7s-7 3-7 7 3 6 7 6c2 0 4-1 5-2M18 1C13 0 4 5 2 13c-1 5 2 6 6 4" fill="none" stroke="#e4e4e4" strokeWidth="2" /></W></TaskSlot>
      <TaskSlot><W w={22} h={22}><path d="M16 4C10 0 3 4 3 10s6 8 10 7 5-6 2-8-7 0-6 3 4 2 4 0" fill="none" stroke="#bbb" strokeWidth="1.6" /></W></TaskSlot>
      <TaskSlot><W w={24} h={24}><path d="M3 11C3 5 7 2 11 2c5 0 7 4 7 9H7c0 5 7 6 10 3v4c-5 3-14 1-14-7zM7 8h7c0-4-6-4-7 0z" fill="#1585e0" /></W></TaskSlot>
      <TaskSlot><W w={26} h={26}><path d="M5 11h11c0-3-2-5-5-5s-6 2-6 6 3 6 6 6c2 0 3-1 5-2" fill="none" stroke="#2e9be8" strokeWidth="3" /><path d="M18 1C12 0 3 6 1 14c-1 5 3 5 6 3" fill="none" stroke="#f1c232" strokeWidth="1.5" /></W></TaskSlot>
      <TaskSlot><W w={24} h={24}><path d="M2 4h6l1 2h9v12H2z" fill="#f2cd5b" /><path d="M7 13h6v5H7z" fill="#3f9be0" /><path d="M5 13l5-3 5 3z" fill="#3f9be0" /></W></TaskSlot>
      <TaskSlot $run><W w={26} h={28}><circle cx="10" cy="10" r="8" fill="#8ec63f" /><path d="M6 10h8c0-5-8-5-8 0s5 5 8 3" fill="none" stroke="#fff" strokeWidth="1.6" /></W></TaskSlot>
      <TaskSlot $run><W w={26} h={28}><path d="M15 3C8 1 2 6 3 12s8 8 12 4l1-6h-6" fill="none" stroke="#2a9ae8" strokeWidth="3.500" /></W></TaskSlot>
      <TaskSlot $run $active><W w={26} h={26}><rect x="0" y="0" width="20" height="20" rx="4" fill="#0d94ea" /><path d="M10 4v12M5 8v4h10V8" stroke="#fff" strokeWidth="2" fill="none" /></W></TaskSlot>
      <Tray $w={52} />
      <Tray $w={34}>链接</Tray>
      <Tray $w={76}><div>26%</div><div>CPU使用</div></Tray>
      <Tray $w={24}><W w={12} h={8}><path d="M1 14L10 4l9 10" fill="none" stroke="#eee" strokeWidth="2" /></W></Tray>
      <Tray $w={24}><W w={16} h={16}><path d="M6 6h11v9H6z" fill="#ddd" /><path d="M2 2h3v4H2zM3 6v6h3" stroke="#fff" fill="#fff" /></W></Tray>
      <Tray $w={24}><W w={17} h={17}><path d="M5 2h13v10H5zM2 8h6v8H2zM11 12v5h6" stroke="#eee" strokeWidth="1.4" fill="none" /></W></Tray>
      <Tray $w={22}><W w={16} h={16}><path d="M2 7h3l5-5v16l-5-5H2zM13 6c2 2 2 6 0 8M16 4c3 4 3 8 0 12" stroke="#eee" strokeWidth="1.4" fill="none" /></W></Tray>
      <Tray $w={38}><W w={22} h={16}><path d="M1 3h18v14H1z" stroke="#eee" fill="none" /><path d="M3 6h14M3 9h14M5 13h10" stroke="#eee" strokeWidth="1.4" strokeDasharray="1.500 1" /></W></Tray>
      <Tray $w={16}>中</Tray>
      <Tray $w={40}><W w={16} h={18}><rect x="1" y="1" width="18" height="18" rx="4" fill="#ea5420" transform="rotate(-6 10 10)" /><path d="M14 6H7v4h6v4H5" stroke="#fff" strokeWidth="2.4" fill="none" /></W></Tray>
      <Tray $w={68}><div>15:23</div><div>2018/5/22</div></Tray>
      <Tray $w={46}>
        <W w={16} h={16}><path d="M1 1h18v14H8l-3 4v-4H1z" fill="#fff" /><path d="M4 5h12M4 8h12M4 11h8" stroke="#222" /></W>
        <NoteNum>1</NoteNum>
      </Tray>
    </Taskbar>

    <Ime>
      <Svg width="27" height="24" viewBox="0 0 27 24">
        <rect x="1" y="1" width="24" height="22" rx="5" fill="#ef5a1c" transform="rotate(-6 13 12)" />
        <path d="M19 6H9v6h9v6H6" stroke="#fff" strokeWidth="3.500" fill="none" />
      </Svg>
      <ImeBox>
        <span>中</span>
        <span>°,</span>
        <W w={17} h={17}><circle cx="10" cy="10" r="8.500" fill="none" stroke="#1f76c8" strokeWidth="2" /><path d="M5.500 11c2 4 7 4 9 0M7 6v3M13 6v3" stroke="#1f76c8" strokeWidth="1.500" fill="none" /></W>
        <W w={15} h={20}><path d="M7 1h6v11H7z" fill="#1f76c8" /><path d="M4 9c0 8 12 8 12 0M10 15v4M6 19h8" stroke="#1f76c8" fill="none" strokeWidth="1.600" /></W>
        <W w={18} h={16}><rect x="1" y="3" width="18" height="14" rx="2" fill="#1f76c8" /><path d="M3 7h14M3 10h14M5 14h10" stroke="#fff" strokeWidth="1.500" strokeDasharray="1.500 1" /></W>
        <W w={18} h={18}><circle cx="8" cy="6" r="4" fill="#aebcc8" /><path d="M1 18c0-7 13-7 13 0z" fill="#aebcc8" /><rect x="9" y="10" width="10" height="7" fill="#fff" stroke="#9ab" /></W>
        <W w={18} h={18}><path d="M6 2l4 2 4-2 5 4-3 3-1-1v11H5V8L4 9 1 6z" fill="#1f76c8" /></W>
        <W w={16} h={18}><path d="M18 3l-3 3-2-1-1-2 3-2c-3-1-6 1-5 5L2 14c-2 3 2 5 4 3l8-8c3 1 6-2 4-6z" fill="#1f76c8" /></W>
      </ImeBox>
    </Ime>
    <Badge>62</Badge>
    <Mark $x={694} $y={125} $w={91} $h={70} />
    <Mark $x={922} $y={117} $w={155} $h={76} />
  </Root>
);

export default App;
